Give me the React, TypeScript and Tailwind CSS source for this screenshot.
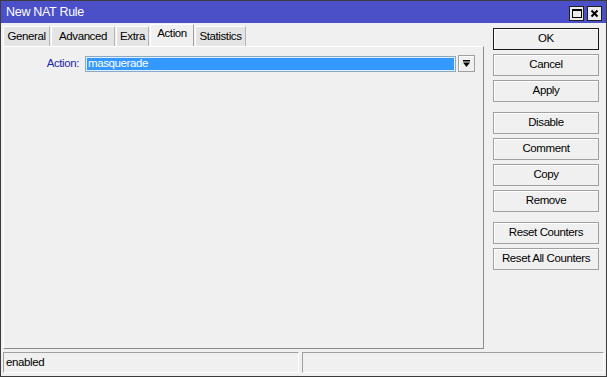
import React from 'react';

const font = { fontFamily: '"Liberation Sans", Arial, sans-serif' };

const tabs = [
    { label: 'General', w: 'w-[47px]' },
    { label: 'Advanced', w: 'w-[64px]' },
    { label: 'Extra', w: 'w-[33px]' },
    { label: 'Action', w: 'w-[44px]', active: true },
    { label: 'Statistics', w: 'w-[51px]' },
];

function WinButton({ label, primary }: { label: string; primary?: boolean }) {
    return (
        <div
            className={`h-[22px] w-full flex items-center justify-center text-[11.5px] tracking-[-0.4px] text-black bg-[#f0f0f0] ${primary
                ? 'border border-[#1a1a1a] shadow-[inset_1px_1px_0_#fff]'
                : 'border border-[#a0a0a0] shadow-[inset_1px_1px_0_#fff]'
                }`}
        >
            {label}
        </div>
    );
}

export default function App() {
    return (
        <div
            className="w-[607px] h-[377px] bg-[#f0f0f0] border border-[#3c3c3c] flex flex-col overflow-hidden"
            style={font}
        >
            {/* title bar */}
            <div className="h-[22px] bg-[#4b4fc8] flex items-center justify-between pl-[5px] pr-[4px]">
                <span className="text-white text-[12.5px] tracking-[-0.3px] mt-[1px]">New NAT Rule</span>
                <div className="flex gap-[3px] mt-[3px]">
                    <div className="w-[15px] h-[15px] bg-[#ececec] border border-[#202020] flex items-center justify-center">
                        <div className="w-[10px] h-[9px] border border-black border-t-2" />
                    </div>
                    <div className="w-[15px] h-[15px] bg-[#ececec] border border-[#202020] flex items-center justify-center">
                        <svg width="9" height="9" viewBox="0 0 9 9">
                            <path d="M1.5 1.5 L7.5 7.5 M7.5 1.5 L1.5 7.5" stroke="#000" strokeWidth="2" />
                        </svg>
                    </div>
                </div>
            </div>

            <div className="flex pl-[2px] mt-px">
                {/* left part: tabs and panel */}
                <div className="w-[481px] flex flex-col">
                    <div className="h-[22px] flex items-end gap-px">
                        {tabs.map((t) =>
                            t.active ? (
                                <div
                                    key={t.label}
                                    className={`${t.w} h-[22px] bg-[#f0f0f0] border-t border-l border-white border-r border-r-[#a0a0a0] flex items-center justify-center text-[11.5px] tracking-[-0.4px] text-black pb-[3px]`}
                                >
                                    {t.label}
                                </div>
                            ) : (
                                <div
                                    key={t.label}
                                    className={`${t.w} h-[20px] bg-[#e4e4e4] border-t border-l border-white border-r border-r-[#b4b4b4] flex items-center justify-center text-[11.5px] tracking-[-0.4px] text-black`}
                                >
                                    {t.label}
                                </div>
                            )
                        )}
                    </div>
                    <div className="h-[303px] border-l border-t border-white border-r border-b border-r-[#8c8c8c] border-b-[#8c8c8c] pt-[8px]">
                        <div className="flex items-center h-[17px]">
                            <span className="w-[75px] text-right text-[11.5px] tracking-[-0.4px] text-[#2626a8]">Action:</span>
                            <div className="ml-[6px] w-[371px] h-[16px] bg-[#3399ff] border border-[#8aa8c8] shadow-[inset_0_0_0_1px_#dfefff] flex items-center pl-[2px]">
                                <span className="text-white text-[11.5px] tracking-[-0.4px] leading-none">masquerade</span>
                            </div>
                            <div className="ml-[2px] w-[17px] h-[17px] bg-[#f0f0f0] border border-[#a0a0a0] shadow-[inset_1px_1px_0_#fff] flex items-center justify-center">
                                <svg width="9" height="9" viewBox="0 0 9 9">
                                    <rect x="1" y="1" width="7" height="1.5" fill="#000" />
                                    <path d="M1 3.5 L8 3.5 L4.5 8 Z" fill="#000" />
                                </svg>
                            </div>
                        </div>
                    </div>
                </div>

                {/* right part: buttons */}
                <div className="ml-[9px] w-[106px] pt-[4px] flex flex-col">
                    <div className="flex flex-col gap-[4px]">
                        <WinButton label="OK" primary />
                        <WinButton label="Cancel" />
                        <WinButton label="Apply" />
                    </div>
                    <div className="flex flex-col gap-[4px] mt-[10px]">
                        <WinButton label="Disable" />
                        <WinButton label="Comment" />
                        <WinButton label="Copy" />
                        <WinButton label="Remove" />
                    </div>
                    <div className="flex flex-col gap-[4px] mt-[10px]">
                        <WinButton label="Reset Counters" />
                        <WinButton label="Reset All Counters" />
                    </div>
                </div>
            </div>

            {/* status bar */}
            <div className="flex gap-[3px] pl-[2px] pr-[2px] mt-[3px]">
                <div className="w-[296px] h-[21px] border-t border-l border-[#a0a0a0] border-b border-r border-b-white border-r-white flex items-center pl-[2px] text-[11.5px] tracking-[-0.4px] text-black">
                    enabled
                </div>
                <div className="flex-1 h-[21px] border-t border-l border-[#a0a0a0] border-b border-r border-b-white border-r-white" />
            </div>
        </div>
    );
}
